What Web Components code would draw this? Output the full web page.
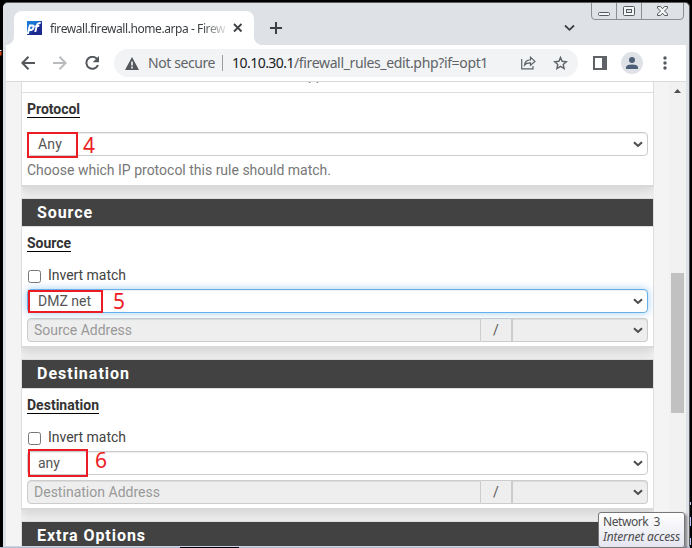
<!DOCTYPE html>
<html lang="en"><head><meta charset="utf-8"><title>Firewall rules</title>
<style>
html,body{margin:0;height:100%;overflow:hidden;background:#000}
</style></head><body>
<desktop-screen></desktop-screen>
<script>
const def=(name,html,ready)=>customElements.define(name,class extends HTMLElement{
  connectedCallback(){
    if(this.shadowRoot)return;
    const a=n=>this.getAttribute(n)||'';
    this.attachShadow({mode:'open'}).innerHTML='<style>*{box-sizing:border-box}</style>'+html(a);
    if(ready)ready(this,a);
  }
});

/* One line of text whose letter spacing is adjusted to fill the width w. */
def('fit-text',a=>`<style>:host{display:block;white-space:pre;width:${a('w')}px;flex:none}span{display:inline-block}</style><span>${a('t')}</span>`,(el,a)=>{
  const s=el.shadowRoot.querySelector('span'),w=s.getBoundingClientRect().width;
  s.style.letterSpacing=((+a('w')-w)/a('t').length)+'px';
});

def('red-mark',a=>`<style>
:host{position:absolute;left:${a('x')}px;top:${a('y')}px;width:${a('bw')}px;height:${a('bh')}px;border:2px solid #ec1c24;color:#ec1c24;z-index:2}
span{position:absolute;left:${a('nx')}px;top:${a('ny')}px;font:21px/20px "Noto Sans",sans-serif}
</style><span>${a('n')}</span>`);

def('chevron-icon',()=>`<style>:host{display:block;width:10px;height:7px}svg{display:block}</style>
<svg width="10" height="7" viewBox="0 0 10 7"><path d="M1 1.2 5 4.9 9 1.2" fill="none" stroke="#4c4c4c" stroke-width="2.1"/></svg>`);

def('select-box',a=>`<style>
:host{display:flex;position:relative;height:24px;align-items:center;justify-content:space-between;padding:0 4px 0 10px;border:1px solid #ccc;border-radius:4px;background:#fff;box-shadow:inset 0 1px 1px rgba(0,0,0,.075);color:#555}
:host([focused]){border-color:#66afe9;box-shadow:inset 0 1px 1px rgba(0,0,0,.075),0 0 8px rgba(102,175,233,.6)}
:host([disabled]){background:#eee;border-radius:0 4px 4px 0;border-left-width:2px}
chevron-icon{margin-left:auto}
</style>${a('value')?`<fit-text t="${a('value')}" w="${a('w')}"></fit-text>`:''}<chevron-icon></chevron-icon><slot></slot>`);

def('address-row',a=>`<style>
:host{display:grid;grid-template-columns:454px 30px 137px;height:24px;margin-top:5px}
.in{border:1px solid #ccc;border-radius:4px 0 0 4px;background:#eee;box-shadow:inset 0 1px 1px rgba(0,0,0,.075);padding-left:6px;display:flex;align-items:center;color:#999}
.add{border:solid #ccc;border-width:1px 0;background:#eee;color:#555;display:flex;align-items:center;justify-content:center}
</style><div class="in"><fit-text t="${a('hint')}" w="${a('w')}"></fit-text></div><div class="add">/</div><select-box disabled></select-box>`);

def('check-line',a=>`<style>
:host{display:flex;height:18px;align-items:center;padding-left:1px;color:#424242}
i{width:13px;height:13px;border:1px solid #767676;border-radius:2.5px;background:#fff;margin-right:7px;position:relative;top:1px}
</style><i></i><fit-text t="Invert match" w="78"></fit-text>`);

def('field-label',a=>`<style>
:host{display:block;font-weight:700;color:#333;height:17px;width:${a('w')}px;border-bottom:1px solid #000;line-height:17px}
</style><fit-text t="${a('t')}" w="${a('w')}"></fit-text>`);

def('rule-panel',a=>`<style>
:host{display:flex;flex-direction:column;height:${a('h')}px;margin-bottom:11px;background:#fff;border:1px solid #ddd;border-bottom:2px solid #d9d9d9;box-shadow:0 5px 10px rgba(0,0,0,.12);flex:none}
header{background:#424242;color:#fff;font-weight:700;font-size:16px;height:${a('hh')}px;line-height:${a('hh')}px;padding-left:15px;flex:none}
.b{padding:${a('pt')}px 5px 0;border-top:1px solid #ddd;flex:1}
</style>${a('title')?`<header><fit-text t="${a('title')}" w="${a('tw')}"></fit-text></header>`:'<slot name="prev"></slot>'}<div class="b"><slot></slot></div>`);

def('scroll-bar',()=>`<style>
:host{display:flex;flex-direction:column;align-items:center;width:17px;background:#f1f1f1;flex:none}
svg{display:block;margin-top:7px;flex:none}b{width:13px;height:140px;background:#c1c1c1;margin-top:180px}
</style><svg width="7" height="4"><path d="M0 4h7L3.5 0z" fill="#505050"/></svg><b></b>`);

def('browser-tabs',()=>`<style>
:host{display:flex;height:42px;background:#dee1e6;padding:8px 0 0 6px;position:relative;font:12px/17px "Noto Sans","Open Sans",sans-serif}
.tab{position:relative;width:240px;margin-left:5px;height:34px;background:#fff;border-radius:8px 8px 0 0;display:flex;align-items:center;padding-left:13px}
.tab:before,.tab:after{content:"";position:absolute;bottom:0;width:8px;height:8px}
.tab:before{left:-8px;background:radial-gradient(circle at 0 0,transparent 7.6px,#fff 8.2px)}
.tab:after{right:-8px;background:radial-gradient(circle at 100% 0,transparent 7.6px,#fff 8.2px)}
.ttl{margin-left:8px;width:177px;overflow:hidden;color:#3c4043;-webkit-mask:linear-gradient(90deg,#000 152px,transparent 180px)}
.x{margin-left:6px}.plus{margin:11px 0 0 16px}.down{margin:13px 0 0 282px}
.ctl{position:absolute;right:4px;top:0}
</style>
<div class="tab"><svg width="15" height="14"><defs><linearGradient id="g" x2="1" y2="1"><stop offset=".35" stop-color="#1976d2"/><stop offset=".6" stop-color="#1c2a90"/></linearGradient></defs><rect width="15" height="14" fill="url(#g)"/><g fill="none" stroke="#fff" stroke-width="2" transform="skewX(-14)"><path d="M4 13V4.5H6.5Q8.2 4.5 8.2 6.4T6.5 9H4M11 11V4.2Q11 2 14.2 2M9.5 5H13.5"/></g></svg>
<div class="ttl"><fit-text t="firewall.firewall.home.arpa - Firew" w="175"></fit-text></div>
<svg class="x" width="10" height="10"><path d="M1 1l7.5 7.5M8.500 1 1 8.500" stroke="#3c4043" stroke-width="1.8"/></svg></div>
<svg class="plus" width="12" height="12"><path d="M6 0v12M0 6h12" stroke="#3c4043" stroke-width="2"/></svg>
<svg class="down" width="11" height="8"><path d="M1 1.500 5.500 5.800 10 1.500" fill="none" stroke="#3c4043" stroke-width="1.8"/></svg>
<svg class="ctl" width="94" height="18" fill="none"><path d="M.5 0V13Q.5 16.500 4 16.500H89Q92.500 16.500 92.500 13V0M25.500 0V16.500M50.500 0V16.500" stroke="#8b8e92"/><g stroke="#56595e"><rect x="7.500" y="9.500" width="11" height="3" rx="1" fill="#f4f5f7"/><rect x="32.500" y="3.500" width="11" height="9" rx="1" fill="#f4f5f7"/><rect x="35.500" y="6.500" width="5" height="3" fill="#dee1e6"/><path d="M66.500 3.500h3l2 2.300 2-2.300h3v1.500L73.500 8l3 3v1.500h-3l-2-2.300-2 2.300h-3V11l3-3-3-3z" fill="#f4f5f7"/></g></svg>`);

def('browser-toolbar',()=>`<style>
:host{display:flex;height:37px;background:#fff;border-bottom:1px solid #d8dadd;align-items:center;margin:0 3px;font:14px/20px "Noto Sans","Open Sans",sans-serif}
svg{display:block;flex:none}.back{margin-left:15px}.fwd{margin-left:18px}.re{margin-left:18px}
.url{display:flex;align-items:center;width:464px;height:28px;border-radius:14px;background:#f1f3f4;margin-left:14px;padding-left:11px;color:#5f6368}
.sep{width:1px;height:16px;background:#9a9da0;margin:0 9px 0 7px}
.av{width:22px;height:22px;border-radius:50%;background:#dee1e6;margin-left:14px}
</style>
<svg class="back" width="14" height="14" fill="none" stroke="#54585c" stroke-width="2"><path d="M14 7H1.500M7.500.8 1.300 7l6.200 6.200"/></svg>
<svg class="fwd" width="14" height="14" fill="none" stroke="#b9bbbe" stroke-width="2"><path d="M0 7H12.500M6.500.8 12.700 7l-6.200 6.200"/></svg>
<svg class="re" width="15" height="14"><path d="M12.200 3.200A6 6 0 1 0 13 9" fill="none" stroke="#54585c" stroke-width="2"/><path d="M14 0v6.300H7.700z" fill="#54585c"/></svg>
<div class="url"><svg width="14" height="13"><path d="M7 0 14 13H0z" fill="#54585c"/><path d="M7 4.500v4M7 9.500v2" stroke="#fff" stroke-width="1.500"/></svg>
<fit-text style="margin-left:9px" t="Not secure" w="67"></fit-text><span class="sep"></span><fit-text style="color:#202124" t="10.10.30.1" w="62"></fit-text><fit-text t="/firewall_rules_edit.php?if=opt1" w="194"></fit-text>
<svg style="margin-left:33px" width="15" height="14" fill="none" stroke="#5f6368" stroke-width="1.200"><path d="M.7 3V12.800H12V10"/><path d="M3.500 9Q4 4 9.500 3.800V1.200L14 5.400 9.500 9.300V6.800Q5.500 6.600 3.500 9z"/></svg>
<svg style="margin-left:17px" width="15" height="14" fill="none" stroke="#5f6368" stroke-width="1.400"><path d="M7.500 1.500 9.100 5.300 13.300 5.700 10.200 8.400 11.100 12.500 7.500 10.300 3.900 12.500 4.800 8.400 1.700 5.700 5.900 5.300z"/></svg></div>
<svg style="margin-left:15px" width="14" height="14"><rect width="14" height="14" fill="#5f6368"/><rect x="2" y="2" width="7" height="10" fill="#fff"/></svg>
<svg class="av" width="22" height="22"><g fill="#4d5f78"><circle cx="11" cy="8" r="3"/><path d="M5 17v-1.500Q5 12.500 11 12.500t6 3V17z"/></g></svg>
<svg style="margin-left:20px" width="4" height="14" fill="#54585c"><circle cx="2" cy="2" r="1.700"/><circle cx="2" cy="7" r="1.700"/><circle cx="2" cy="12" r="1.700"/></svg>`);

def('rule-page',()=>`<style>
:host{display:flex;flex:1;min-height:0;margin:0 3px;overflow:hidden;background:#f4f4f4;font:14px/20px Roboto,sans-serif}
main{width:633px;margin:0 15px;flex:none;background:#f2f2f2;overflow:hidden}
.prev{height:10px;overflow:hidden;color:#777;position:relative;padding-left:286px}
.prev span{display:block;margin-top:-17px}
.help{color:#777;margin-top:4px}
field-label{margin-bottom:14px}
rule-panel:first-child{margin-top:0;border-top:0}
</style>
<main>
<rule-panel h="105" pt="8"><div slot="prev" class="prev"><span>pp</span></div>
<field-label t="Protocol" w="53"></field-label>
<select-box value="Any" w="24"><red-mark x="-1" y="-1" bw="51" bh="26" n="4" nx="54" ny="1"></red-mark></select-box>
<div class="help"><fit-text t="Choose which IP protocol this rule should match." w="304"></fit-text></div></rule-panel>
<rule-panel h="150" hh="27" title="Source" tw="56" pt="8"><field-label t="Source" w="44"></field-label>
<check-line></check-line>
<div style="height:5px"></div>
<select-box focused value="DMZ net" w="53"><red-mark x="0" y="0" bw="75" bh="23" n="5" nx="83" ny="-1"></red-mark></select-box>
<address-row hint="Source Address" w="98"></address-row></rule-panel>
<rule-panel h="151" hh="28" title="Destination" tw="93" pt="8"><field-label t="Destination" w="72"></field-label>
<check-line></check-line><div style="height:5px"></div>
<select-box value="any" w="22"><red-mark x="0" y="-3" bw="60" bh="28" n="6" nx="65" ny="-1"></red-mark></select-box>
<address-row hint="Destination Address" w="126"></address-row></rule-panel>
<rule-panel h="60" hh="28" title="Extra Options" tw="109" pt="0"></rule-panel>
</main><scroll-bar></scroll-bar>`);

def('network-tip',()=>`<style>
:host{position:absolute;left:598px;top:512px;width:87px;height:36px;border:1px solid #767676;border-radius:3px;background:linear-gradient(#fff,#e4e5f0);padding:1px 0 0 4px;font:12px/15px "Noto Sans","Open Sans",sans-serif;color:#4c4c4c;box-shadow:2px 2px 3px rgba(0,0,0,.45)}
.i{font-style:italic}
</style><fit-text t="Network  3" w="57"></fit-text><fit-text class="i" t="Internet access" w="77"></fit-text>`);

def('desktop-screen',()=>`<style>
:host{display:block;position:relative;width:692px;height:548px;background:#000;overflow:hidden}
.win{display:flex;flex-direction:column;width:688px;height:547px;padding-top:3px;margin-left:3px}
.in{display:flex;flex-direction:column;flex:1;min-height:0;background:#dee1e6;box-shadow:0 -1px #5b5d60;border-right:1px solid #55585c;border-left:0;border-bottom:1px solid #cdd5e8;border-radius:5px 5px 0 0;overflow:hidden;width:687px}
.bits{position:absolute;left:0;top:0;pointer-events:none}
</style>
<div class="win"><div class="in"><browser-tabs></browser-tabs><browser-toolbar></browser-toolbar><rule-page></rule-page></div></div>
<svg class="bits" width="692" height="548"><path d="M0 50.500h1.500" stroke="#fff"/><path d="M0 53.500h1.500" stroke="#d84315" stroke-width="4"/><path d="M0 547.500H180M239 547.500H690" stroke="#b4bccf"/><path d="M690.500 502v3M690.500 517v9M690.500 538v7" stroke="#b8c4ff"/></svg>
<network-tip></network-tip>`);
</script></body></html>
